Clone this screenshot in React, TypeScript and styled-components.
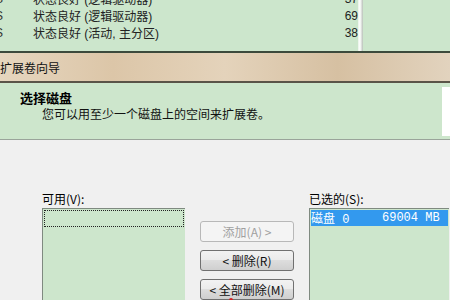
import styled, { createGlobalStyle } from 'styled-components';

const GlobalStyle = createGlobalStyle`
  html, body {
    margin: 0;
    padding: 0;
    width: 450px;
    height: 300px;
    overflow: hidden;
    background: #f0f0f0;
    font-family: 'Liberation Sans', 'Noto Sans CJK SC', sans-serif;
    font-size: 12px;
    color: #000;
  }
`;

const Screen = styled.div`
  width: 450px;
  height: 300px;
  display: flex;
  flex-direction: column;
  overflow: hidden;
`;

// disk list behind the wizard
const DiskList = styled.div`
  height: 52px;
  background: #cce6cc;
  display: flex;
  border-bottom: 2px solid #3c4a3c;
`;

const DiskRows = styled.div`
  width: 358px;
  margin-top: -10px;
`;

const DiskRow = styled.div`
  display: flex;
  height: 17px;
  align-items: center;
`;

const FsCell = styled.div`
  width: 33px;
  margin-left: -5px;
  color: #333;
`;

const StatusCell = styled.div`
  flex: 1;
  padding-left: 5px;
  color: #222;
`;

const SizeCell = styled.div`
  width: 40px;
  text-align: right;
  color: #222;
`;

const ColumnSplit = styled.div`
  width: 5px;
  background: linear-gradient(to right, #e8f2e8, #ffffff 40%, #b8c0b8);
`;

const TitleBar = styled.div`
  height: 28px;
  display: flex;
  align-items: center;
  background: linear-gradient(
    to right,
    #e6d6bf,
    #dcc6a8 25%,
    #e4d3bb 50%,
    #d6c0a2 75%,
    #e2d3be
  );
  border-bottom: 2px solid #5a5448;
  font-family: 'Noto Sans CJK SC', sans-serif;
  font-size: 12px;
  color: #111;
`;

const Header = styled.div`
  height: 57px;
  background: #cde6cc;
  display: flex;
  border-bottom: 1px solid #9aa49a;
`;

const HeaderText = styled.div`
  flex: 1;
  padding: 6px 0 0 20px;
  font-family: 'Noto Sans CJK SC', sans-serif;
`;

const HeaderTitle = styled.div`
  font-weight: bold;
  font-size: 13px;
  line-height: 17px;
`;

const HeaderSub = styled.div`
  padding-left: 22px;
  font-size: 12px;
  line-height: 16px;
  color: #111;
`;

const HeaderImage = styled.div`
  width: 8px;
  margin: 4px 0 3px;
  background: #ffffff;
`;

const Body = styled.div`
  flex: 1;
  display: flex;
  padding: 50px 0 0 42px;
  gap: 15px;
  font-family: 'Noto Sans CJK SC', sans-serif;
`;

const ListColumn = styled.div<{ $width: number }>`
  width: ${(p) => p.$width}px;
  display: flex;
  flex-direction: column;
`;

const Label = styled.div`
  height: 17px;
  line-height: 17px;
  font-size: 12px;
`;

const ListBox = styled.div`
  flex: 1;
  background: #cde6cc;
  border: 1px solid #7f8a80;
  border-right: none;
  border-bottom: none;
  padding: 1px;
  margin-top: 1px;
`;

const FocusRow = styled.div`
  height: 15px;
  border: 1px dotted #222;
`;

const SelectedRow = styled.div`
  height: 16px;
  display: flex;
  align-items: center;
  background: #3399ee;
  color: #fff;
  font-family: 'Liberation Mono', 'Noto Sans CJK SC', monospace;
  font-size: 12px;
`;

const SelName = styled.span`
  width: 71px;
`;

const Buttons = styled.div`
  width: 94px;
  display: flex;
  flex-direction: column;
  gap: 8px;
  padding-top: 31px;
  position: relative;
`;

const Btn = styled.div<{ $disabled?: boolean }>`
  height: 19px;
  display: flex;
  align-items: center;
  justify-content: center;
  border: 1px solid ${(p) => (p.$disabled ? '#b8b8b8' : '#707070')};
  border-radius: 3px;
  background: ${(p) =>
    p.$disabled
      ? '#f4f4f4'
      : 'linear-gradient(to bottom, #f2f2f2, #ebebeb 45%, #dddddd 50%, #cfcfcf)'};
  color: ${(p) => (p.$disabled ? '#a0a0a0' : '#111')};
  font-size: 12px;
  white-space: pre;
`;

const RedDot = styled.div`
  position: absolute;
  left: 29px;
  bottom: -2px;
  width: 4px;
  height: 4px;
  border-radius: 50%;
  background: #d02020;
`;

const App = () => {
  return (
    <Screen>
      <GlobalStyle />
      <DiskList>
        <DiskRows>
          <DiskRow>
            <FsCell>S</FsCell>
            <StatusCell>状态良好 (逻辑驱动器)</StatusCell>
            <SizeCell>37</SizeCell>
          </DiskRow>
          <DiskRow>
            <FsCell>S</FsCell>
            <StatusCell>状态良好 (逻辑驱动器)</StatusCell>
            <SizeCell>69</SizeCell>
          </DiskRow>
          <DiskRow>
            <FsCell>S</FsCell>
            <StatusCell>状态良好 (活动, 主分区)</StatusCell>
            <SizeCell>38</SizeCell>
          </DiskRow>
        </DiskRows>
        <ColumnSplit />
      </DiskList>
      <TitleBar>扩展卷向导</TitleBar>
      <Header>
        <HeaderText>
          <HeaderTitle>选择磁盘</HeaderTitle>
          <HeaderSub>您可以用至少一个磁盘上的空间来扩展卷。</HeaderSub>
        </HeaderText>
        <HeaderImage />
      </Header>
      <Body>
        <ListColumn $width={143}>
          <Label>可用(V):</Label>
          <ListBox>
            <FocusRow />
          </ListBox>
        </ListColumn>
        <Buttons>
          <Btn $disabled>添加(A) &gt;</Btn>
          <Btn>&lt; 删除(R)</Btn>
          <Btn>&lt; 全部删除(M)</Btn>
          <RedDot />
        </Buttons>
        <ListColumn $width={140}>
          <Label>已选的(S):</Label>
          <ListBox>
            <SelectedRow>
              <SelName>磁盘 0</SelName>
              <span>69004 MB</span>
            </SelectedRow>
          </ListBox>
        </ListColumn>
      </Body>
    </Screen>
  );
};

export default App;
